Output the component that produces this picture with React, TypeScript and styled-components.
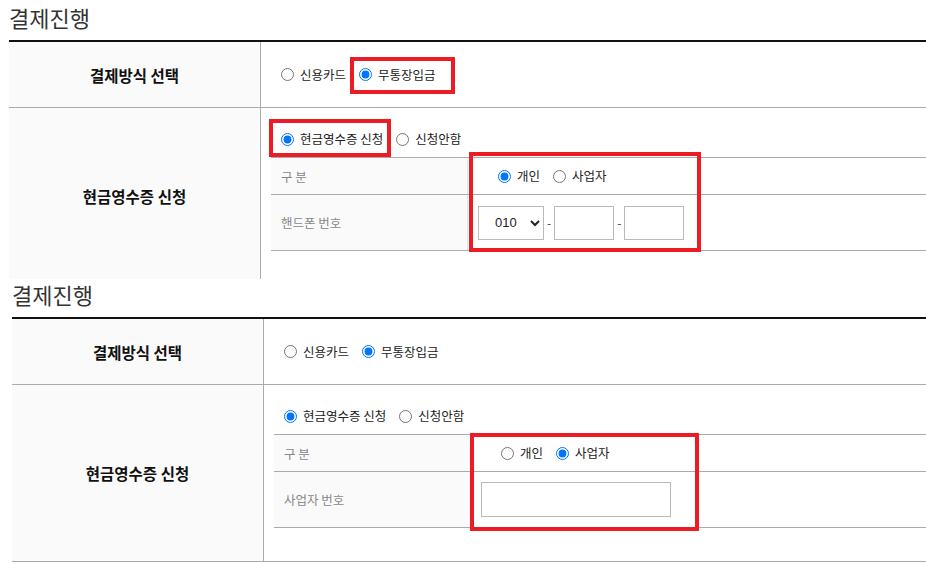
import styled, { createGlobalStyle } from "styled-components";

const GlobalStyle = createGlobalStyle`
  *, *::before, *::after {
    box-sizing: border-box;
  }

  html, body {
    margin: 0;
    padding: 0;
    background: #fff;
  }

  body {
    font-family: "Noto Sans CJK KR", "Noto Sans", sans-serif;
    color: #222;
  }
`;

const Page = styled.div`
  width: 926px;
  height: 564px;
  overflow: hidden;
  display: flex;
  flex-direction: column;
`;

const Shot = styled.div<{ $height: number; $left: number; $top: number }>`
  flex: none;
  height: ${(p) => p.$height}px;
  overflow: hidden;
  padding: ${(p) => p.$top}px 0 0 ${(p) => p.$left}px;
`;

const Title = styled.h2`
  margin: 0;
  height: 38px;
  font-size: 22px;
  font-weight: 400;
  line-height: 30px;
  color: #333;
`;

const Table = styled.div`
  border-top: 2px solid #111;
`;

const Row = styled.div`
  display: grid;
  grid-template-columns: 252px 1fr;
  border-bottom: 1px solid #aaa;
`;

const HeadCell = styled.div`
  display: flex;
  align-items: center;
  justify-content: center;
  background: #fafafa;
  border-right: 1px solid #aaa;
  font-size: 15.5px;
  font-weight: 700;
  color: #111;
`;

const ChoiceCell = styled.div`
  display: flex;
  align-items: center;
  height: 65px;
  padding-left: 20px;
`;

const DetailCell = styled.div`
  padding: 21px 0 33px 10px;
`;

const RadioGroup = styled.div<{ $indent: number }>`
  display: flex;
  align-items: center;
  gap: 13px;
  height: 20px;
  padding-left: ${(p) => p.$indent}px;
`;

const Option = styled.label<{ $mark?: string }>`
  position: relative;
  display: inline-flex;
  align-items: center;
  gap: 6px;
  height: 20px;
  font-size: 12.5px;
  line-height: 20px;
  color: #222;
  white-space: nowrap;

  ${(p) =>
    p.$mark &&
    `
    &::after {
      content: "";
      position: absolute;
      inset: ${p.$mark};
      border: 4px solid #ed1c24;
      pointer-events: none;
    }
  `}
`;

const Radio = styled.input.attrs({ type: "radio" })`
  margin: 0;
  width: 13px;
  height: 13px;
`;

const SubTable = styled.div`
  position: relative;
  margin-top: 8px;
  border-top: 1px solid #aaa;
`;

const SubRow = styled.div<{ $height: number }>`
  display: grid;
  grid-template-columns: 197px 1fr;
  height: ${(p) => p.$height}px;
  border-bottom: 1px solid #aaa;
`;

const SubLabel = styled.div`
  display: flex;
  align-items: center;
  padding-left: 10px;
  background: #fafafa;
  border-right: 1px solid #e4e4e4;
  font-size: 12.5px;
  color: #888;
`;

const SubValue = styled.div<{ $indent: number }>`
  display: flex;
  align-items: center;
  padding-left: ${(p) => p.$indent}px;
`;

const PhoneSelect = styled.select`
  width: 66px;
  height: 34px;
  padding: 0 0 0 12px;
  border: 1px solid #bbb;
  border-radius: 0;
  background: #fff;
  font: 13px "Liberation Sans", Arial, sans-serif;
  color: #222;
`;

const Dash = styled.span`
  margin: 0 3px;
  font-size: 12px;
  color: #444;
`;

const TextField = styled.input<{ $width: number; $height: number }>`
  width: ${(p) => p.$width}px;
  height: ${(p) => p.$height}px;
  margin: 0;
  padding: 0 8px;
  border: 1px solid #bbb;
  border-radius: 0;
  background: #fff;
  font-size: 13px;
  outline: none;
`;

const Frame = styled.div<{ $left: number; $top: number; $width: number; $height: number }>`
  position: absolute;
  left: ${(p) => p.$left}px;
  top: ${(p) => p.$top}px;
  width: ${(p) => p.$width}px;
  height: ${(p) => p.$height}px;
  border: 4px solid #ed1c24;
  pointer-events: none;
`;

type Receipt = "personal" | "business";

interface SectionSpec {
  id: string;
  receipt: Receipt;
  shot: { height: number; left: number; top: number };
  markMethod?: boolean;
  markReceipt?: boolean;
  frame: { left: number; top: number; width: number; height: number };
}

const sections: SectionSpec[] = [
  {
    id: "a",
    receipt: "personal",
    shot: { height: 279, left: 9, top: 2 },
    markMethod: true,
    markReceipt: true,
    frame: { left: 198, top: -6, width: 232, height: 100 },
  },
  {
    id: "b",
    receipt: "business",
    shot: { height: 285, left: 12, top: 0 },
    frame: { left: 196, top: -2, width: 229, height: 98 },
  },
];

const PaymentSection = ({ spec }: { spec: SectionSpec }) => {
  const { id, receipt, markMethod, markReceipt, frame } = spec;
  const business = receipt === "business";

  return (
    <div>
      <Title>결제진행</Title>
      <Table>
        <Row>
          <HeadCell>결제방식 선택</HeadCell>
          <ChoiceCell>
            <RadioGroup $indent={0}>
              <Option>
                <Radio name={`method-${id}`} />
                신용카드
              </Option>
              <Option $mark={markMethod ? "-8px -19px -9px -9px" : undefined}>
                <Radio name={`method-${id}`} defaultChecked />
                무통장입금
              </Option>
            </RadioGroup>
          </ChoiceCell>
        </Row>
        <Row>
          <HeadCell>현금영수증 신청</HeadCell>
          <DetailCell>
            <RadioGroup $indent={10}>
              <Option $mark={markReceipt ? "-10px -8px -8px -12px" : undefined}>
                <Radio name={`receipt-${id}`} defaultChecked />
                현금영수증 신청
              </Option>
              <Option>
                <Radio name={`receipt-${id}`} />
                신청안함
              </Option>
            </RadioGroup>
            <SubTable>
              <SubRow $height={37}>
                <SubLabel>구 분</SubLabel>
                <SubValue $indent={30}>
                  <RadioGroup $indent={0}>
                    <Option>
                      <Radio name={`type-${id}`} defaultChecked={!business} />
                      개인
                    </Option>
                    <Option>
                      <Radio name={`type-${id}`} defaultChecked={business} />
                      사업자
                    </Option>
                  </RadioGroup>
                </SubValue>
              </SubRow>
              <SubRow $height={56}>
                <SubLabel>{business ? "사업자 번호" : "핸드폰 번호"}</SubLabel>
                <SubValue $indent={10}>
                  {business ? (
                    <TextField $width={190} $height={35} />
                  ) : (
                    <>
                      <PhoneSelect defaultValue="010">
                        <option>010</option>
                        <option>011</option>
                        <option>016</option>
                        <option>017</option>
                        <option>018</option>
                        <option>019</option>
                      </PhoneSelect>
                      <Dash>-</Dash>
                      <TextField $width={60} $height={34} />
                      <Dash>-</Dash>
                      <TextField $width={60} $height={34} />
                    </>
                  )}
                </SubValue>
              </SubRow>
              <Frame
                $left={frame.left}
                $top={frame.top}
                $width={frame.width}
                $height={frame.height}
              />
            </SubTable>
          </DetailCell>
        </Row>
      </Table>
    </div>
  );
};

const App = () => (
  <Page>
    <GlobalStyle />
    {sections.map((spec) => (
      <Shot
        key={spec.id}
        $height={spec.shot.height}
        $left={spec.shot.left}
        $top={spec.shot.top}
      >
        <PaymentSection spec={spec} />
      </Shot>
    ))}
  </Page>
);

export default App;
